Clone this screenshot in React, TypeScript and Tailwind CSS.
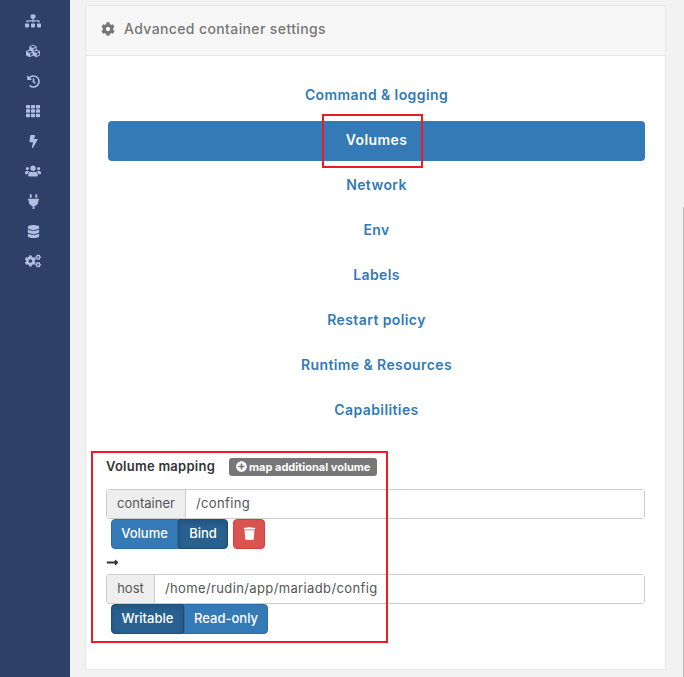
/**
 * Advanced container settings panel with sidebar and volume mapping form.
 */

import React from 'react';
import {
  FaBolt,
  FaCog,
  FaCogs,
  FaCubes,
  FaDatabase,
  FaHistory,
  FaLongArrowAltRight,
  FaPlug,
  FaPlusCircle,
  FaSitemap,
  FaTh,
  FaTrash,
  FaUsers,
} from 'react-icons/fa';

const sideIcons = [
  { Icon: FaSitemap, size: 16 },
  { Icon: FaCubes, size: 14 },
  { Icon: FaHistory, size: 13 },
  { Icon: FaTh, size: 14 },
  { Icon: FaBolt, size: 13 },
  { Icon: FaUsers, size: 16 },
  { Icon: FaPlug, size: 15 },
  { Icon: FaDatabase, size: 13 },
  { Icon: FaCogs, size: 16 },
];
const tabs = ['Command & logging', 'Volumes', 'Network', 'Env', 'Labels', 'Restart policy', 'Runtime & Resources', 'Capabilities'];

function Segment({ label, active, className }: { label: string; active?: boolean; className: string }) {
  return (
    <span
      className={`flex h-[30px] items-center justify-center border text-[13px] font-medium text-white ${className} ${
        active ? 'border-[#204d74] bg-[#286090] shadow-[inset_0_3px_5px_rgba(0,0,0,0.125)]' : 'border-[#2e6da4] bg-[#337ab7]'
      }`}
    >
      {label}
    </span>
  );
}

function PathInput({ label, value, labelWidth }: { label: string; value: string; labelWidth: string }) {
  return (
    <div className="flex h-[30px] rounded-[3px] border border-[#cccccc] text-[13px] text-[#555555]">
      <span className={`flex items-center justify-center border-r border-[#cccccc] bg-[#eeeeee] ${labelWidth}`}>{label}</span>
      <span className="flex flex-1 items-center bg-white pl-[10px] tracking-[0.37px]">{value}</span>
    </div>
  );
}

export default function App() {
  return (
    <div className="relative flex h-[677px] w-[684px] overflow-hidden bg-[#f2f2f2] font-['Inter',sans-serif]">
      {/* Sidebar */}
      <aside className="flex w-[70px] shrink-0 flex-col items-center gap-[14px] bg-[#2e3f68] pr-[4px] pt-[13px] text-[#b0bfe0]">
        {sideIcons.map(({ Icon, size }, i) => (
          <span key={i} className="flex h-4 items-center justify-center">
            <Icon size={size} />
          </span>
        ))}
      </aside>

      {/* Card */}
      <main className="ml-[15px] mt-[5px] h-[665px] w-[581px] border border-[#e7e7e7] bg-white">
        <header className="flex h-[50px] items-center gap-[9px] border-b border-[#e7e7e7] bg-[#f6f6f6] pb-[4px] pl-[15px] text-[14px] font-medium tracking-[0.38px] text-[#767676]">
          <FaCog size={14} />
          <span>Advanced container settings</span>
        </header>

        <div className="pl-[22px] pr-[20px] pt-5">
          <nav className="flex flex-col gap-[5px]">
            {tabs.map((tab) => (
              <span
                key={tab}
                className={`flex h-10 items-center justify-center rounded-[4px] pb-[4px] text-[14px] font-semibold tracking-[0.4px] ${
                  tab === 'Volumes' ? 'bg-[#337ab7] text-white' : 'text-[#337ab7]'
                }`}
              >
                {tab}
              </span>
            ))}
          </nav>

          <div className="-ml-[2px] mt-[26px] flex items-center">
            <span className="text-[13px] font-semibold tracking-[0.25px] text-[#333333]">Volume mapping</span>
            <span className="ml-[14px] flex h-[18px] items-center gap-[2px] rounded-[3px] bg-[#777777] px-[7px] text-[11px] font-bold text-white">
              <FaPlusCircle size={11} />
              map additional volume
            </span>
          </div>

          <div className="-ml-[2px] mt-[12px]">
            <PathInput label="container" value="/confing" labelWidth="w-[79px]" />
            <div className="ml-[5px] flex">
              <Segment label="Volume" className="w-[67px] rounded-l-[4px]" />
              <Segment label="Bind" active className="w-[50px] rounded-r-[4px]" />
              <span className="ml-[5px] flex h-[30px] w-[32px] items-center justify-center rounded-[4px] border border-[#d43f3a] bg-[#d9534f] text-white">
                <FaTrash size={13} />
              </span>
            </div>
            <div className="flex h-[25px] items-center pt-[2px] text-[#333333]">
              <FaLongArrowAltRight size={13} />
            </div>
            <PathInput label="host" value="/home/rudin/app/mariadb/config" labelWidth="w-[48px]" />
            <div className="ml-[5px] flex">
              <Segment label="Writable" active className="w-[73px] rounded-l-[4px]" />
              <Segment label="Read-only" className="w-[84px] rounded-r-[4px]" />
            </div>
          </div>
        </div>
      </main>

      {/* Annotation rectangles drawn over the screenshot */}
      <div className="absolute left-[322px] top-[114px] h-[54px] w-[101px] border-2 border-[#ed1c24]" />
      <div className="absolute left-[91px] top-[451px] h-[192px] w-[297px] border-2 border-[#ed1c24]" />

      {/* Scrollbar edge */}
      <div className="absolute right-0 top-[207px] h-[470px] w-px bg-[#bbbbbb]" />
    </div>
  );
}
